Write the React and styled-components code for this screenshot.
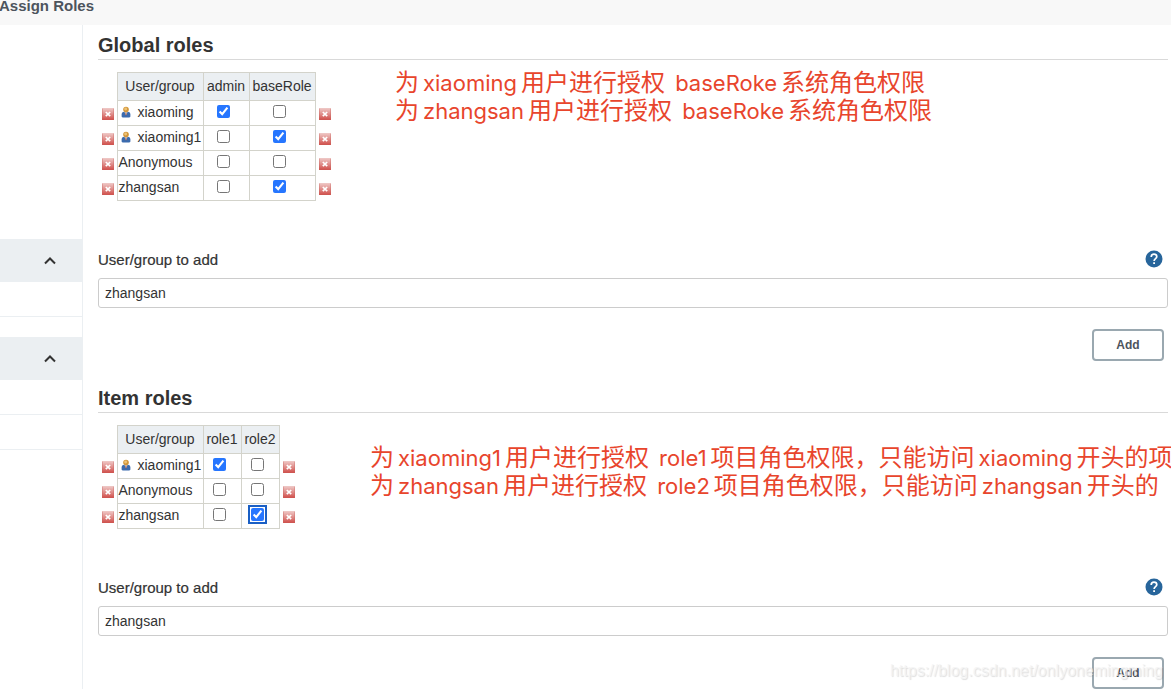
import React, { useState } from "react";
import styled, { createGlobalStyle } from "styled-components";

const GlobalStyle = createGlobalStyle`
  * {
    box-sizing: border-box;
  }
  body {
    margin: 0;
    background: #fff;
    color: #333;
    font-family: "Liberation Sans", Arial, sans-serif;
    font-size: 14px;
    line-height: 20px;
    overflow-x: hidden;
  }
`;

const Page = styled.div`
  position: relative;
  display: flex;
  flex-direction: column;
  overflow: hidden;
`;

const Breadcrumbs = styled.header`
  display: flex;
  align-items: flex-start;
  height: 25px;
  overflow: hidden;
  background: #f8f8f8;
`;

const Crumb = styled.a`
  margin: -4px 0 0 -1px;
  color: #4d545d;
  font-size: 15px;
  font-weight: 700;
  text-decoration: none;
`;

const Body = styled.div`
  display: flex;
`;

const SidePanel = styled.aside`
  flex: 0 0 83px;
  padding-top: 214px;
  border-right: 1px solid #ebeff2;
`;

const Pane = styled.section`
  margin-bottom: 20px;
`;

const PaneHeader = styled.div`
  display: flex;
  align-items: center;
  justify-content: flex-end;
  height: 43px;
  padding-right: 25px;
  background: #ebeff2;
`;

const Collapse = styled.button`
  display: flex;
  padding: 0;
  border: 0;
  background: none;
`;

const PaneRow = styled.div`
  height: 35px;
  border-bottom: 1px solid #ebeff2;
`;

const Main = styled.main`
  flex: 1;
  min-width: 0;
  padding: 8px 3px 0 15px;
`;

const Section = styled.section`
  margin-bottom: 25px;
  &:last-child {
    margin-bottom: 0;
  }
`;

const Title = styled.h2`
  margin: 0 0 12px;
  padding-bottom: 2px;
  border-bottom: 1px solid #d9d9d9;
  font-size: 20px;
  line-height: 24px;
`;

const TableRow = styled.div`
  display: flex;
  align-items: flex-start;
`;

const Matrix = styled.table`
  flex: none;
  border-collapse: collapse;
`;

const HeadCell = styled.th`
  width: ${(p) => p.$width}px;
  height: 28px;
  padding: 0 0 2px;
  border: 1px solid #d3d3cb;
  background: #ebeff2;
  font-weight: 400;
`;

const EdgeCell = styled.td`
  width: 19px;
  height: 25px;
  padding: 2px 0 0 ${(p) => (p.$end ? 3 : 4)}px;
`;

const NameCell = styled.td`
  height: 25px;
  padding: 0 0 2px 1px;
  border: 1px solid #d3d3cb;
  white-space: nowrap;
`;

const Name = styled.span`
  display: flex;
  align-items: center;
  gap: 5px;
`;

const CheckCell = styled.td`
  height: 25px;
  padding: 0 5px 3px 0;
  border: 1px solid #d3d3cb;
`;

const Check = styled.input`
  display: block;
  width: 13px;
  height: 13px;
  margin: 0 auto;
  border-radius: 2px;
  accent-color: #2676ff;
  outline: ${(p) => (p.$focused ? "2px solid #1a5fc4" : "none")};
  outline-offset: 1px;
`;

const IconButton = styled.button`
  display: block;
  padding: 0;
  border: 0;
  background: none;
  svg {
    display: block;
  }
`;

const Note = styled.div`
  margin: ${(p) => p.$margin};
  color: #e8452c;
  font-family: Inter, "Noto Sans CJK SC", sans-serif;
  font-size: 24px;
  line-height: 28px;
`;

const NoteLine = styled.div`
  display: flex;
  align-items: baseline;
  gap: 4px;
  height: 28px;
  white-space: pre;
`;

const Latin = styled.span`
  font-size: 22px;
`;

const LabelRow = styled.div`
  display: flex;
  align-items: flex-start;
  justify-content: space-between;
  margin-top: 49px;
  padding-right: 5px;
`;

const Label = styled.label`
  font-size: 15px;
  -webkit-text-stroke: 0.2px #333;
`;

const TextBox = styled.input`
  display: block;
  width: 100%;
  height: 30px;
  margin-top: 8px;
  padding: 0 6px;
  border: 1px solid #ccc;
  border-radius: 3px;
  background: #fff;
  color: #333;
  font-family: inherit;
  font-size: 14px;
`;

const Actions = styled.div`
  display: flex;
  justify-content: flex-end;
  margin-top: 21px;
  padding-right: 4px;
`;

const AddButton = styled.button`
  width: 72px;
  height: 32px;
  padding: 0;
  border: 2px solid #9aa8b0;
  border-radius: 4px;
  background: #fff;
  color: #4d545d;
  font-family: inherit;
  font-size: 12px;
  font-weight: 700;
`;

const Watermark = styled.div`
  position: absolute;
  right: 8px;
  bottom: 8px;
  color: rgba(244, 244, 244, 0.8);
  text-shadow: 1px 1px 1px rgba(0, 0, 0, 0.13);
  font-size: 16px;
  pointer-events: none;
`;

const ChevronUp = () => (
  <svg width="14" height="10" viewBox="0 0 14 10" fill="none">
    <path d="M2 7.5l5-5 5 5" stroke="#333" strokeWidth="2" />
  </svg>
);

const DeleteIcon = () => (
  <svg width="12" height="12" viewBox="0 0 12 12">
    <defs>
      <linearGradient id="del" x1="0" y1="0" x2="0" y2="1">
        <stop offset="0" stopColor="#efcac8" />
        <stop offset="0.5" stopColor="#e08e8b" />
        <stop offset="1" stopColor="#d04b47" />
      </linearGradient>
    </defs>
    <rect width="12" height="12" rx="0.5" fill="url(#del)" />
    <path d="M0.5 0.5v11h11v-11" fill="none" stroke="#c9605c" strokeOpacity="0.35" />
    <path d="M3.8 4l4.4 4.2M8.2 4L3.8 8.2" stroke="#fff" strokeWidth="1.7" />
  </svg>
);

const UserIcon = () => (
  <svg width="14" height="14" viewBox="-1 -1 16 16">
    <path d="M2 12V9.4Q2 7 4.6 6.8H9.4Q12 7 12 9.4V12Q12 13.4 7 13.4T2 12z" fill="#3b6bae" />
    <path d="M5.2 6.8h3.6L7.4 10.4h-.8z" fill="#cdd6e4" />
    <path d="M6.6 7.6h.8l.3 2.6-.7.8-.7-.8z" fill="#a8583e" />
    <circle cx="7" cy="4.2" r="3.2" fill="#d2963a" />
    <circle cx="6.6" cy="3.5" r="1.7" fill="#edc275" />
  </svg>
);

const HelpIcon = () => (
  <svg width="18" height="18" viewBox="0 0 18 18" fill="none">
    <circle cx="9" cy="9" r="8.5" fill="#27659b" />
    <path
      d="M6.2 7.1C6.2 5.2 7.3 4.2 9 4.2s2.8 1 2.8 2.5c0 1.9-2.7 2.1-2.7 4.3"
      stroke="#fff"
      strokeWidth="1.7"
    />
    <path d="M8.2 12.2h1.8v1.8H8.2z" fill="#fff" />
  </svg>
);

const sections = [
  {
    id: "global",
    title: "Global roles",
    roles: [
      { name: "admin", width: 46 },
      { name: "baseRole", width: 66 },
    ],
    users: [
      { name: "xiaoming", icon: true, granted: ["admin"] },
      { name: "xiaoming1", icon: true, granted: ["baseRole"] },
      { name: "Anonymous", granted: [] },
      { name: "zhangsan", granted: ["baseRole"] },
    ],
    note: {
      margin: "-3px 0 0 61px",
      lines: [
        ["为", "xiaoming", "用户进行授权", " baseRoke", "系统角色权限"],
        ["为", "zhangsan", "用户进行授权", " baseRoke", "系统角色权限"],
      ],
    },
  },
  {
    id: "item",
    title: "Item roles",
    roles: [
      { name: "role1", width: 38 },
      { name: "role2", width: 38 },
    ],
    users: [
      { name: "xiaoming1", icon: true, granted: ["role1"] },
      { name: "Anonymous", granted: [] },
      { name: "zhangsan", granted: ["role2"], focused: "role2" },
    ],
    note: {
      margin: "19px 0 0 72px",
      lines: [
        ["为", "xiaoming1", "用户进行授权", " role1", "项目角色权限，只能访问", "xiaoming", "开头的项"],
        ["为", "zhangsan", "用户进行授权", " role2", "项目角色权限，只能访问", "zhangsan", "开头的"],
      ],
    },
  },
];

const DeleteCell = ({ name, end }) => (
  <EdgeCell $end={end}>
    <IconButton type="button" aria-label={`Remove ${name}`}>
      <DeleteIcon />
    </IconButton>
  </EdgeCell>
);

const RoleMatrix = ({ roles, users }) => (
  <Matrix>
    <thead>
      <tr>
        <td />
        <HeadCell $width={86}>User/group</HeadCell>
        {roles.map((role) => (
          <HeadCell key={role.name} $width={role.width}>
            {role.name}
          </HeadCell>
        ))}
        <td />
      </tr>
    </thead>
    <tbody>
      {users.map((user) => (
        <tr key={user.name}>
          <DeleteCell name={user.name} />
          <NameCell>
            <Name>
              {user.icon && <UserIcon />}
              {user.name}
            </Name>
          </NameCell>
          {roles.map((role) => (
            <CheckCell key={role.name}>
              <Check
                type="checkbox"
                aria-label={`${role.name} for ${user.name}`}
                defaultChecked={user.granted.includes(role.name)}
                $focused={user.focused === role.name}
              />
            </CheckCell>
          ))}
          <DeleteCell name={user.name} end />
        </tr>
      ))}
    </tbody>
  </Matrix>
);

const AddUser = ({ id }) => {
  const [value, setValue] = useState("zhangsan");
  return (
    <>
      <LabelRow>
        <Label htmlFor={id}>User/group to add</Label>
        <IconButton type="button" aria-label="Help">
          <HelpIcon />
        </IconButton>
      </LabelRow>
      <TextBox id={id} type="text" value={value} onChange={(e) => setValue(e.target.value)} />
      <Actions>
        <AddButton type="button">Add</AddButton>
      </Actions>
    </>
  );
};

const App = () => {
  return (
    <Page>
      <GlobalStyle />
      <Breadcrumbs>
        <Crumb href="#">Assign Roles</Crumb>
      </Breadcrumbs>
      <Body>
        <SidePanel>
          {[1, 2].map((rows) => (
            <Pane key={rows}>
              <PaneHeader>
                <Collapse type="button" aria-label="Collapse">
                  <ChevronUp />
                </Collapse>
              </PaneHeader>
              {Array.from({ length: rows }, (_, i) => (
                <PaneRow key={i} />
              ))}
            </Pane>
          ))}
        </SidePanel>
        <Main>
          {sections.map((section) => (
            <Section key={section.id}>
              <Title>{section.title}</Title>
              <TableRow>
                <RoleMatrix roles={section.roles} users={section.users} />
                <Note $margin={section.note.margin}>
                  {section.note.lines.map((line) => (
                    <NoteLine key={line[1]}>
                      {line.map((part, i) =>
                        i % 2 ? <Latin key={i}>{part}</Latin> : <span key={i}>{part}</span>
                      )}
                    </NoteLine>
                  ))}
                </Note>
              </TableRow>
              <AddUser id={`${section.id}-user`} />
            </Section>
          ))}
        </Main>
      </Body>
      <Watermark>https://blog.csdn.net/onlyonemingming</Watermark>
    </Page>
  );
};

export default App;
